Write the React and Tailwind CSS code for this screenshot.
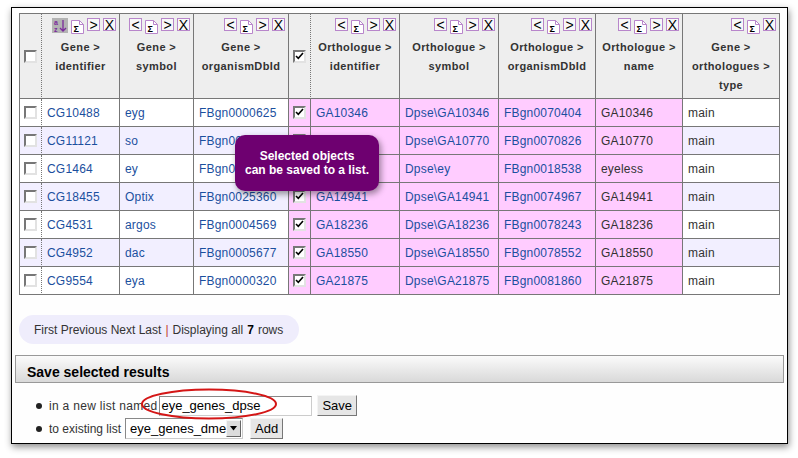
import React from "react";

const rows = [
  ["CG10488", "eyg", "FBgn0000625", "GA10346", "Dpse\\GA10346", "FBgn0070404", "GA10346"],
  ["CG11121", "so", "FBgn0003460", "GA10770", "Dpse\\GA10770", "FBgn0070826", "GA10770"],
  ["CG1464", "ey", "FBgn0005558", "GA15345", "Dpse\\ey", "FBgn0018538", "eyeless"],
  ["CG18455", "Optix", "FBgn0025360", "GA14941", "Dpse\\GA14941", "FBgn0074967", "GA14941"],
  ["CG4531", "argos", "FBgn0004569", "GA18236", "Dpse\\GA18236", "FBgn0078243", "GA18236"],
  ["CG4952", "dac", "FBgn0005677", "GA18550", "Dpse\\GA18550", "FBgn0078552", "GA18550"],
  ["CG9554", "eya", "FBgn0000320", "GA21875", "Dpse\\GA21875", "FBgn0081860", "GA21875"],
];

const columns = [
  { w: "w-[77px]", label: ["Gene >", "identifier"], icons: ["sort", "sum", ">", "X"] },
  { w: "w-[73px]", label: ["Gene >", "symbol"], icons: ["<", "sum", ">", "X"] },
  { w: "w-[94px]", label: ["Gene >", "organismDbId"], icons: ["<", "sum", ">", "X"] },
  { w: "w-[88px]", label: ["Orthologue >", "identifier"], icons: ["<", "sum", ">", "X"] },
  { w: "w-[98px]", label: ["Orthologue >", "symbol"], icons: ["<", "sum", ">", "X"] },
  { w: "w-[96px]", label: ["Orthologue >", "organismDbId"], icons: ["<", "sum", ">", "X"] },
  { w: "w-[86px]", label: ["Orthologue >", "name"], icons: ["<", "sum", ">", "X"] },
  { w: "w-[96px]", label: ["Gene >", "orthologues >", "type"], icons: ["<", "sum", "X"] },
];

const CheckBox = ({ checked }) => (
  <span className="inline-flex w-[13px] h-[13px] border-2 border-t-[#777] border-l-[#777] border-r-[#e2e2e2] border-b-[#e2e2e2] bg-white items-start justify-start">
    {checked && (
      <svg width="9" height="8" viewBox="0 0 9 8">
        <path d="M1 4 L3.3 6.3 L8 1" stroke="#000" strokeWidth="1.6" fill="none" />
      </svg>
    )}
  </span>
);

// summary icon: little page with folded corner and a sigma
const SumIcon = () => (
  <svg width="13" height="14" viewBox="0 0 13 14" className="mt-[2px]">
    <path d="M0.5 0.5 H8.5 L12.5 4.5 V13.5 H0.5 Z" fill="#fff" stroke="#b886cb" />
    <path d="M8.5 0.5 V4.5 H12.5" fill="none" stroke="#b886cb" />
    <text x="2.5" y="12" fontSize="9" fontWeight="bold" fontFamily="Liberation Sans, Arial, sans-serif" fill="#000">
      Σ
    </text>
  </svg>
);

const SortIcon = () => (
  <span className="inline-flex w-[16px] h-[15px] bg-[#b3b3b3]">
    <svg width="16" height="15" viewBox="0 0 16 15">
      <text x="2" y="7" fontSize="7" fontWeight="bold" fontFamily="Liberation Sans, Arial, sans-serif" fill="#7b2a9c">
        a
      </text>
      <text x="2" y="14" fontSize="7" fontWeight="bold" fontFamily="Liberation Sans, Arial, sans-serif" fill="#7b2a9c">
        z
      </text>
      <path d="M11 2 V13 M8 10 L11 13 L14 10" stroke="#7b2a9c" strokeWidth="1.3" fill="none" />
    </svg>
  </span>
);

const HeadIcon = ({ kind }) => {
  if (kind === "sort") return <SortIcon />;
  if (kind === "sum") return <SumIcon />;
  return (
    <span className="inline-flex w-[13px] h-[13px] border border-[#b886cb] bg-[#f8f8f8] items-center justify-center text-[14px] font-normal leading-none text-black">
      {kind}
    </span>
  );
};

const App = () => {
  return (
    <div className="w-[798px] h-[458px] bg-white pt-[7px] pl-[11px] font-['Liberation_Sans',Arial,sans-serif]">
      <div className="relative w-[777px] h-[437px] border border-black bg-[#fefefe] shadow-[1px_3px_7px_rgba(0,0,0,0.45)]">
        <div className="pt-[5px] pl-[7px]">
          <table className="border-separate border-spacing-0 border-l border-t border-[#777]">
            <thead>
              <tr className="bg-[#eeeeee]">
                <th className="p-0 border-r border-b border-[#777] [border-right-style:dotted] align-middle">
                  <div className="w-[21px] h-[84px] flex items-center justify-center">
                    <CheckBox />
                  </div>
                </th>
                {columns.map((col, i) => (
                  <React.Fragment key={i}>
                    <th className="p-0 border-r border-b border-[#777] align-top">
                      <div className={`${col.w} h-[84px] flex flex-col`}>
                        <div className="flex justify-end items-start gap-[3px] pr-[3px] pt-[4px] h-[19px]">
                          {col.icons.map((ic, j) => (
                            <HeadIcon key={j} kind={ic} />
                          ))}
                        </div>
                        <div className="mt-[5px] text-center text-[11px] font-bold leading-[19px] tracking-[0.4px] text-[#333]">
                          {col.label.map((l, k) => (
                            <div key={k}>{l}</div>
                          ))}
                        </div>
                      </div>
                    </th>
                    {i === 2 && (
                      <th className="p-0 border-r border-b border-[#777] [border-right-style:dotted] align-middle">
                        <div className="w-[21px] h-[84px] flex items-center justify-center">
                          <CheckBox checked />
                        </div>
                      </th>
                    )}
                  </React.Fragment>
                ))}
              </tr>
            </thead>
            <tbody>
              {rows.map((r, i) => {
                const bg = i % 2 === 0 ? "bg-white" : "bg-[#f2efff]";
                const cell = "p-0 border-r border-b border-[#777]";
                const inner = "h-[27px] flex items-center px-[5px] text-[12px] tracking-[0.2px] whitespace-nowrap";
                return (
                  <tr key={i}>
                    <td className={`${cell} ${bg} [border-right-style:dotted]`}>
                      <div className="w-[21px] h-[27px] flex items-center justify-center">
                        <CheckBox />
                      </div>
                    </td>
                    <td className={`${cell} ${bg}`}>
                      <div className={`w-[77px] ${inner} text-[#1b4f9e]`}>{r[0]}</div>
                    </td>
                    <td className={`${cell} ${bg}`}>
                      <div className={`w-[73px] ${inner} text-[#1b4f9e]`}>{r[1]}</div>
                    </td>
                    <td className={`${cell} ${bg}`}>
                      <div className={`w-[94px] ${inner} text-[#1b4f9e]`}>{r[2]}</div>
                    </td>
                    <td className={`${cell} bg-[#ffccff]`}>
                      <div className="w-[21px] h-[27px] flex items-center justify-center">
                        <CheckBox checked />
                      </div>
                    </td>
                    <td className={`${cell} bg-[#ffccff]`}>
                      <div className={`w-[88px] ${inner} text-[#1b4f9e]`}>{r[3]}</div>
                    </td>
                    <td className={`${cell} bg-[#ffccff]`}>
                      <div className={`w-[98px] ${inner} text-[#1b4f9e]`}>{r[4]}</div>
                    </td>
                    <td className={`${cell} bg-[#ffccff]`}>
                      <div className={`w-[96px] ${inner} text-[#1b4f9e]`}>{r[5]}</div>
                    </td>
                    <td className={`${cell} bg-[#ffccff]`}>
                      <div className={`w-[86px] ${inner} text-[#333]`}>{r[6]}</div>
                    </td>
                    <td className={`${cell} ${bg}`}>
                      <div className={`w-[96px] ${inner} text-[#333]`}>main</div>
                    </td>
                  </tr>
                );
              })}
            </tbody>
          </table>

          <div className="mt-[20px] w-[280px] h-[29px] rounded-full bg-[#efedfc] flex items-center pl-[15px] text-[12px] text-[#333] whitespace-nowrap">
            First Previous Next Last <span className="text-[#c0392b] mx-[4px]">|</span> Displaying all{" "}
            <span className="font-bold text-black mx-[4px]">7</span> rows
          </div>
        </div>

        <div className="mt-[11px] mx-[3px] h-[28px] border border-[#999] bg-linear-to-b from-[#fbfbfb] to-[#d9d9d9] pl-[11px] pt-[8px] text-[14px] font-bold leading-[16px] text-black">
          Save selected results
        </div>

        <div className="mt-[12px] pl-[24px] flex flex-col gap-[2px] text-[12px] text-[#333]">
          <div className="flex items-center h-[21px]">
            <span className="w-[6px] h-[6px] rounded-full bg-[#222] mr-[7px]"></span>
            <span className="tracking-[0.3px]">in a new list named</span>
            <span className="ml-[2px] w-[153px] h-[20px] border border-[#ccc] border-t-[#888] border-l-[#888] bg-white flex items-center pl-[1px] text-[13px] text-black">
              eye_genes_dpse
            </span>
            <span className="ml-[5px] h-[21px] px-[4px] bg-[#e6e6e6] border border-[#f4f4f4] border-r-[#777] border-b-[#777] flex items-center text-[13px] text-black">
              Save
            </span>
          </div>
          <div className="flex items-center h-[21px]">
            <span className="w-[6px] h-[6px] rounded-full bg-[#222] mr-[7px]"></span>
            <span>to existing list</span>
            <span className="ml-[4px] w-[118px] h-[21px] border border-[#ccc] border-t-[#888] border-l-[#888] bg-white flex items-center text-[13px] text-black">
              <span className="flex-1 pl-[4px] whitespace-nowrap overflow-hidden">eye_genes_dme</span>
              <span className="w-[15px] h-[17px] mr-[1px] bg-[#dcdcdc] border border-[#f4f4f4] border-r-[#666] border-b-[#666] flex items-center justify-center">
                <svg width="7" height="5" viewBox="0 0 7 5">
                  <path d="M0 0 H7 L3.5 4.5 Z" fill="#000" />
                </svg>
              </span>
            </span>
            <span className="ml-[7px] h-[21px] px-[4px] bg-[#e6e6e6] border border-[#f4f4f4] border-r-[#777] border-b-[#777] flex items-center text-[13px] text-black">
              Add
            </span>
          </div>
        </div>

        <div className="absolute left-[223px] top-[127px] w-[144px] h-[56px] rounded-[10px] bg-[#6e0070] shadow-[2px_3px_6px_rgba(0,0,0,0.4)] flex items-center justify-center text-center text-white text-[12px] font-bold leading-[14px]">
          Selected objects
          <br />
          can be saved to a list.
        </div>

        <svg className="absolute left-[128px] top-[380px]" width="138" height="32" viewBox="0 0 138 32">
          <ellipse cx="69" cy="16" rx="67" ry="14.5" fill="none" stroke="#d41616" strokeWidth="2" />
        </svg>
      </div>
    </div>
  );
};

export default App;
